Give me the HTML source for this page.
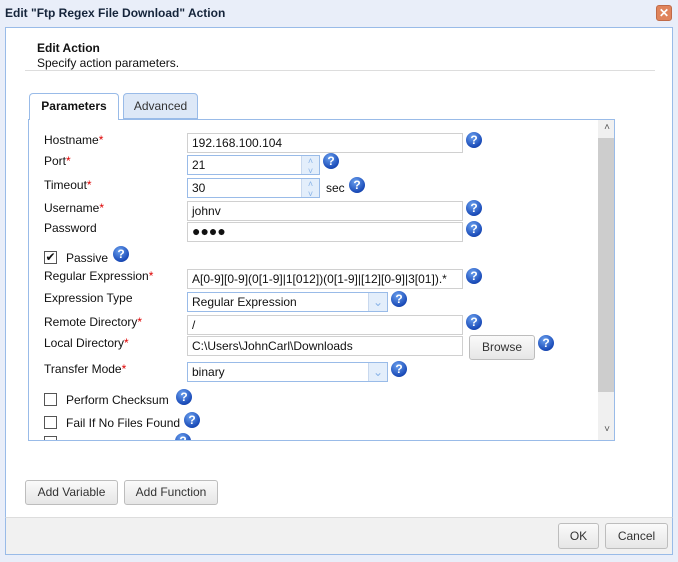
<!DOCTYPE html><html><head><style>
*{box-sizing:border-box;margin:0;padding:0}
body{width:678px;height:562px;background:#e9eef9;font-family:"Liberation Sans",sans-serif;font-size:12px;color:#111;position:relative;overflow:hidden}
.a{position:absolute}
.in{position:absolute;background:#fff;border:1px solid #d0d0d0;height:20px;padding:2px 4px;font-size:12px;line-height:15px;white-space:nowrap;overflow:hidden}
.q{position:absolute;width:16px;height:16px;border-radius:50%;background:radial-gradient(circle at 40% 30%,#6aa0ee,#1a4bb8 70%,#0d2f80);color:#fff;font-weight:bold;font-size:12px;line-height:16px;text-align:center}
.lbl{position:absolute;left:44px;font-size:12px}
.r{color:#d00}
.btn{position:absolute;border:1px solid #bdbdbd;border-radius:3px;background:linear-gradient(#fafafa,#e6e6e6);text-align:center;font-size:12px;color:#333}
.cb{position:absolute;width:13px;height:13px;border:1px solid #555;background:#fff}
.sp{position:absolute;background:#e3eefb;border-left:1px solid #c8d8ee;color:#8ab4e8;font-size:9px;text-align:center}
</style></head><body>
<div class="a" style="left:5px;top:6px;font-size:12px;font-weight:bold;color:#15243a">Edit "Ftp Regex File Download" Action</div>
<div class="a" style="left:656px;top:5px;width:16px;height:16px;border-radius:3px;background:#e0845c;border:1px solid #c06a48;color:#fff;font-weight:bold;font-size:12px;line-height:14px;text-align:center">✕</div>
<div class="a" style="left:5px;top:27px;width:668px;height:491px;background:#fff;border:1px solid #99bbe8;border-bottom:none"></div>
<div class="a" style="left:5px;top:517px;width:668px;height:38px;background:#f1f1f1;border:1px solid #99bbe8;border-top:1px solid #ddd"></div>
<div class="a" style="left:37px;top:41px;font-weight:bold">Edit Action</div>
<div class="a" style="left:37px;top:56px">Specify action parameters.</div>
<div class="a" style="left:25px;top:70px;width:630px;height:1px;background:#ddd"></div>
<div class="a" style="left:29px;top:93px;width:90px;height:27px;background:#fff;border:1px solid #99bbe8;border-bottom:none;border-radius:4px 4px 0 0;text-align:center;line-height:25px;font-weight:bold;z-index:2">Parameters</div>
<div class="a" style="left:123px;top:93px;width:75px;height:26px;background:#dde8f7;border:1px solid #99bbe8;border-radius:4px 4px 0 0;text-align:center;line-height:25px;color:#333">Advanced</div>
<div class="a" style="left:28px;top:119px;width:587px;height:322px;border:1px solid #99bbe8;background:#fff;overflow:hidden">
 <div class="a" style="right:0;top:0;width:16px;height:320px;background:#f0f0f0"></div>
 <div class="a" style="right:0;top:18px;width:16px;height:254px;background:#cdcdcd"></div>
 <div class="a" style="right:4px;top:2px;font-size:10px;color:#555">˄</div>
 <div class="a" style="right:4px;top:304px;font-size:10px;color:#555">˅</div>
 <div class="cb" style="left:15px;top:316px"></div>
 <div class="q" style="left:146px;top:313px">?</div>
</div>
<div class="lbl" style="top:133px">Hostname<span class="r">*</span></div>
<div class="in" style="left:187px;top:133px;width:276px">192.168.100.104</div><div class="q" style="left:466px;top:132px">?</div>
<div class="lbl" style="top:154px">Port<span class="r">*</span></div>
<div class="in" style="left:187px;top:155px;width:133px;border-color:#99bbe8">21</div><div class="sp" style="left:301px;top:156px;width:18px;height:18px">˄<br>˅</div><div class="q" style="left:323px;top:153px">?</div>
<div class="lbl" style="top:178px">Timeout<span class="r">*</span></div>
<div class="in" style="left:187px;top:178px;width:133px;border-color:#99bbe8">30</div><div class="sp" style="left:301px;top:179px;width:18px;height:18px">˄<br>˅</div>
<div class="a" style="left:326px;top:181px">sec</div><div class="q" style="left:349px;top:177px">?</div>
<div class="lbl" style="top:201px">Username<span class="r">*</span></div>
<div class="in" style="left:187px;top:201px;width:276px">johnv</div><div class="q" style="left:466px;top:200px">?</div>
<div class="lbl" style="top:221px">Password</div>
<div class="in" style="left:187px;top:222px;width:276px;font-size:14px;line-height:13px">●●●●</div><div class="q" style="left:466px;top:221px">?</div>
<div class="cb" style="left:44px;top:251px;font-size:12px;line-height:11px;text-align:center">✔</div>
<div class="a" style="left:66px;top:251px">Passive</div><div class="q" style="left:113px;top:246px">?</div>
<div class="lbl" style="top:269px">Regular Expression<span class="r">*</span></div>
<div class="in" style="left:187px;top:269px;width:276px">A[0-9][0-9](0[1-9]|1[012])(0[1-9]|[12][0-9]|3[01]).*</div><div class="q" style="left:466px;top:268px">?</div>
<div class="lbl" style="top:291px">Expression Type</div>
<div class="in" style="left:187px;top:292px;width:201px;border-color:#99bbe8">Regular Expression</div><div class="sp" style="left:368px;top:293px;width:19px;height:18px;line-height:18px;font-size:12px">⌄</div><div class="q" style="left:391px;top:291px">?</div>
<div class="lbl" style="top:315px">Remote Directory<span class="r">*</span></div>
<div class="in" style="left:187px;top:315px;width:276px">/</div><div class="q" style="left:466px;top:314px">?</div>
<div class="lbl" style="top:336px">Local Directory<span class="r">*</span></div>
<div class="in" style="left:187px;top:336px;width:276px">C:\Users\JohnCarl\Downloads</div>
<div class="btn" style="left:469px;top:335px;width:66px;height:25px;line-height:23px">Browse</div><div class="q" style="left:538px;top:335px">?</div>
<div class="lbl" style="top:362px">Transfer Mode<span class="r">*</span></div>
<div class="in" style="left:187px;top:362px;width:201px;border-color:#99bbe8">binary</div><div class="sp" style="left:368px;top:363px;width:19px;height:18px;line-height:18px;font-size:12px">⌄</div><div class="q" style="left:391px;top:361px">?</div>
<div class="cb" style="left:44px;top:393px"></div><div class="a" style="left:66px;top:393px">Perform Checksum</div><div class="q" style="left:176px;top:389px">?</div>
<div class="cb" style="left:44px;top:416px"></div><div class="a" style="left:66px;top:416px">Fail If No Files Found</div><div class="q" style="left:184px;top:412px">?</div>
<div class="btn" style="left:25px;top:480px;width:93px;height:25px;line-height:23px">Add Variable</div>
<div class="btn" style="left:124px;top:480px;width:94px;height:25px;line-height:23px">Add Function</div>
<div class="btn" style="left:558px;top:523px;width:41px;height:26px;line-height:24px">OK</div>
<div class="btn" style="left:605px;top:523px;width:63px;height:26px;line-height:24px">Cancel</div>
</body></html>
